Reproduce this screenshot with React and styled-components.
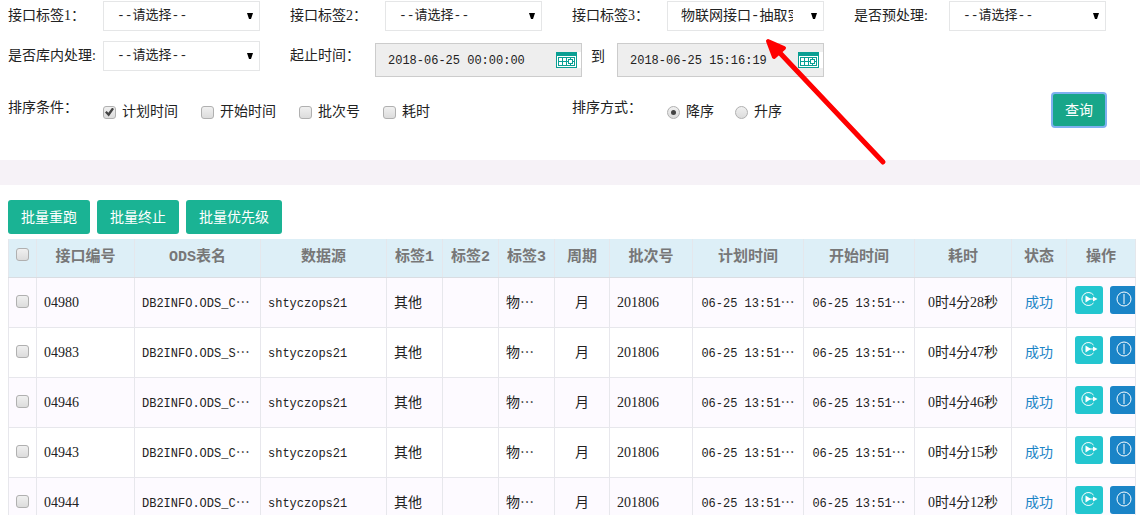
import React, { useState } from 'react';
import { styled, createGlobalStyle } from 'styled-components';

const HOLDER = '--请选择--';

const rows = [
  { id: '04980', table: 'DB2INFO.ODS_C', cost: '0时4分28秒' },
  { id: '04983', table: 'DB2INFO.ODS_S', cost: '0时4分47秒' },
  { id: '04946', table: 'DB2INFO.ODS_C', cost: '0时4分46秒' },
  { id: '04943', table: 'DB2INFO.ODS_C', cost: '0时4分15秒' },
  { id: '04944', table: 'DB2INFO.ODS_C', cost: '0时4分12秒' },
];

const columns = [
  ['接口编号', 98],
  ['ODS表名', 126],
  ['数据源', 126],
  ['标签1', 56],
  ['标签2', 56],
  ['标签3', 56],
  ['周期', 55],
  ['批次号', 83],
  ['计划时间', 111],
  ['开始时间', 111],
  ['耗时', 97],
  ['状态', 55],
  ['操作', 69],
];

function SelectField({ id, label, options = [HOLDER] }) {
  return (
    <Field>
      <Label htmlFor={id}>{label}</Label>
      <SelectWrap>
        <Select id={id} $filled={options[0] !== HOLDER}>
          {options.map((o) => (
            <option key={o}>{o}</option>
          ))}
        </Select>
        <Caret viewBox="0 0 6 7">
          <path d="M0 0h6L4 6H2z" fill="#000" />
        </Caret>
      </SelectWrap>
    </Field>
  );
}

function DateInput({ id, label, value }) {
  return (
    <DateBox>
      <DateText id={id} aria-label={label} defaultValue={value} readOnly />
      <CalendarIcon />
    </DateBox>
  );
}

function CalendarIcon() {
  return (
    <Calendar viewBox="0 0 25 16" shapeRendering="crispEdges">
      <path d="M0 0h25v16H0z" fill="#fff" />
      <path d="M0 0h21v16H0z" fill="#0a9f93" />
      <path d="M1 4h19v11H1z" fill="#fff" />
      <path
        d="M2.5 5.5h16v8h-16zM2.5 9.5h9M6.5 5.5v8M10.5 5.5v8M12.5 7.5h4v4h-4zM14.5 5.5v2M14.5 11.5v2M16.5 9.5h2"
        fill="none"
        stroke="#0a9f93"
      />
    </Calendar>
  );
}

function RerunIcon() {
  return (
    <Glyph viewBox="0 0 18 16">
      <path d="M13.500 4A6.500 6.500 0 1 0 13.500 12" />
      <path d="M6 8h8" />
      <path d="M5.500 4.500L11 8l-5.500 3.500zM13 5.500L17.500 8L13 10.500z" fill="#fff" stroke="none" />
    </Glyph>
  );
}

function StopIcon() {
  return (
    <Glyph viewBox="0 0 18 16">
      <circle cx="9" cy="8" r="7" />
      <path d="M9 3v10" />
    </Glyph>
  );
}

function App() {
  const [checked, setChecked] = useState([]);

  const toggle = (id) =>
    setChecked((prev) =>
      prev.includes(id) ? prev.filter((v) => v !== id) : [...prev, id]
    );
  const toggleAll = () =>
    setChecked(checked.length === rows.length ? [] : rows.map((r) => r.id));

  return (
    <>
      <GlobalStyle />
      <Filters>
        <SelectField id="tag1" label="接口标签1：" />
        <SelectField id="tag2" label="接口标签2：" />
        <Marked>
          <SelectField
            id="tag3"
            label="接口标签3："
            options={['物联网接口-抽取实时']}
          />
          <Arrow viewBox="0 0 130 135">
            <path d="M18 17L121 126" stroke="#f00" strokeWidth="5" strokeLinecap="round" />
            <path d="M6 5l16 7-10 9z" fill="#f00" stroke="#f00" strokeWidth="4" strokeLinejoin="round" />
          </Arrow>
        </Marked>
        <SelectField id="pre" label="是否预处理:" />

        <SelectField id="inner" label="是否库内处理:" />
        <DateRange>
          <DateLabel htmlFor="from">起止时间：</DateLabel>
          <DateInput id="from" label="开始" value="2018-06-25 00:00:00" />
          <To>到</To>
          <DateInput id="to" label="结束" value="2018-06-25 15:16:19" />
        </DateRange>
      </Filters>

      <SortRow>
        <Choices $span={2}>
          <Legend>排序条件：</Legend>
          <Options $gap={23}>
            <Choice>
              <Check type="checkbox" defaultChecked />
              计划时间
            </Choice>
            <Choice>
              <Check type="checkbox" />
              开始时间
            </Choice>
            <Choice>
              <Check type="checkbox" />
              批次号
            </Choice>
            <Choice>
              <Check type="checkbox" />
              耗时
            </Choice>
          </Options>
        </Choices>
        <Choices>
          <Legend>排序方式：</Legend>
          <Options $gap={21}>
            <Choice>
              <Radio type="radio" name="order" defaultChecked />
              降序
            </Choice>
            <Choice>
              <Radio type="radio" name="order" />
              升序
            </Choice>
          </Options>
        </Choices>
        <SearchCell>
          <SearchButton type="button">查询</SearchButton>
        </SearchCell>
      </SortRow>

      <Divider />

      <Toolbar>
        <Button type="button">批量重跑</Button>
        <Button type="button">批量终止</Button>
        <Button type="button">批量优先级</Button>
      </Toolbar>

      <TableWrap>
        <Table>
          <colgroup>
            <Col $w={28} />
            {columns.map(([name, w]) => (
              <Col key={name} $w={w} />
            ))}
          </colgroup>
          <thead>
            <tr>
              <Th>
                <TableCheck
                  type="checkbox"
                  aria-label="全选"
                  checked={checked.length === rows.length}
                  onChange={toggleAll}
                />
              </Th>
              {columns.map(([name]) => (
                <Th key={name}>{name}</Th>
              ))}
            </tr>
          </thead>
          <tbody>
            {rows.map((row) => (
              <Row key={row.id}>
                <Td $center>
                  <TableCheck
                    type="checkbox"
                    aria-label={row.id}
                    checked={checked.includes(row.id)}
                    onChange={() => toggle(row.id)}
                  />
                </Td>
                <Td>{row.id}</Td>
                <Td>
                  <Mono>{row.table}</Mono>
                  <Dots>…</Dots>
                </Td>
                <Td>
                  <Mono>shtyczops21</Mono>
                </Td>
                <Td>其他</Td>
                <Td />
                <Td>
                  物<Dots>…</Dots>
                </Td>
                <Td $center>月</Td>
                <Td>201806</Td>
                <Td $center>
                  <Mono>06-25 13:51</Mono>
                  <Dots>…</Dots>
                </Td>
                <Td $center>
                  <Mono>06-25 13:51</Mono>
                  <Dots>…</Dots>
                </Td>
                <Td $center>{row.cost}</Td>
                <Td $center>
                  <Status>成功</Status>
                </Td>
                <Td>
                  <Actions>
                    <IconButton type="button" aria-label="重跑" $color="#23c6cf">
                      <RerunIcon />
                    </IconButton>
                    <IconButton type="button" aria-label="终止" $color="#1a84c7">
                      <StopIcon />
                    </IconButton>
                  </Actions>
                </Td>
              </Row>
            ))}
          </tbody>
        </Table>
      </TableWrap>
    </>
  );
}

export default App;

const GlobalStyle = createGlobalStyle`
  * {
    box-sizing: border-box;
  }
  body {
    margin: 0;
    background: #fff;
    color: #222;
    font-family: 'Liberation Serif', 'Noto Sans CJK SC', serif;
    font-size: 14px;
    line-height: 20px;
  }
  input, select, button {
    font-family: inherit;
    font-size: inherit;
    line-height: inherit;
    color: inherit;
    margin: 0;
  }
`;

const Filters = styled.div`
  display: grid;
  grid-template-columns: repeat(4, 1fr);
  row-gap: 10px;
  padding: 1px 4px 0 8px;
`;

const Field = styled.div`
  display: flex;
  align-items: flex-start;
`;

const Label = styled.label`
  width: 95px;
  flex: none;
  padding-top: 5px;
  white-space: nowrap;
`;

const SelectWrap = styled.div`
  position: relative;
  width: 157px;
`;

const Select = styled.select`
  appearance: none;
  width: 100%;
  height: 30px;
  padding: 0 30px 0 13px;
  border: 1px solid #e5e6e7;
  border-radius: 0;
  background: #fff;
  font-family: 'Liberation Mono', 'Noto Sans CJK SC', monospace;
  font-size: ${({ $filled }) => ($filled ? '14px' : '13px')};
`;

const Caret = styled.svg`
  position: absolute;
  top: 12px;
  right: 7px;
  width: 6px;
  height: 7px;
  pointer-events: none;
`;

const Marked = styled.div`
  position: relative;
`;

const Arrow = styled.svg`
  position: absolute;
  z-index: 1;
  top: 35px;
  left: 190px;
  width: 130px;
  height: 135px;
  pointer-events: none;
`;

const DateRange = styled.div`
  grid-column: span 3;
  display: flex;
  align-items: flex-start;
`;

const DateLabel = styled(Label)`
  width: 85px;
`;

const DateBox = styled.div`
  display: flex;
  align-items: center;
  width: 207px;
  height: 34px;
  margin-top: 2px;
  border: 1px solid #ccc;
  background: #eee;
`;

const DateText = styled.input`
  flex: 1;
  min-width: 0;
  padding: 2px 0 0 12px;
  border: 0;
  outline: 0;
  background: none;
  font-family: 'Liberation Mono', monospace;
  font-size: 12px;
`;

const Calendar = styled.svg`
  width: 25px;
  height: 16px;
`;

const To = styled.span`
  width: 35px;
  padding: 6px 0 0 9px;
`;

const SortRow = styled.div`
  display: grid;
  grid-template-columns: repeat(4, 1fr);
  padding: 16px 4px 33px 8px;
`;

const Choices = styled.div`
  grid-column: span ${({ $span = 1 }) => $span};
  display: flex;
  align-items: flex-start;
`;

const Legend = styled.span`
  width: 95px;
  padding-top: 5px;
  white-space: nowrap;
`;

const Options = styled.div`
  display: flex;
  gap: ${({ $gap }) => $gap}px;
`;

const Choice = styled.label`
  display: flex;
  align-items: center;
  gap: 6px;
  padding-top: 9px;
  white-space: nowrap;
`;

const Check = styled.input`
  appearance: none;
  display: inline-block;
  position: relative;
  flex: none;
  width: 13px;
  height: 13px;
  border: 1px solid #b0b0b0;
  border-radius: 3px;
  background: linear-gradient(#f0f0f0, #dcdcdc);
  vertical-align: middle;

  &:checked::after {
    content: '';
    position: absolute;
    inset: 1px;
    background: #444;
    clip-path: polygon(0 55%, 18% 38%, 38% 58%, 80% 0, 100% 16%, 42% 100%);
  }
`;

const Radio = styled(Check)`
  border-radius: 50%;

  &:checked::after {
    inset: 3px;
    border-radius: 50%;
    clip-path: none;
  }
`;

const TableCheck = styled(Check)`
  margin-bottom: 4px;
`;

const SearchCell = styled.div`
  display: flex;
  justify-content: flex-end;
  align-items: flex-start;
  padding-right: 30px;
`;

const Button = styled.button`
  height: 34px;
  padding: 2px 13px 0;
  border: 0;
  border-radius: 3px;
  background: #1ab394;
  color: #fff;
  cursor: pointer;
`;

const SearchButton = styled(Button)`
  background: #18a689;
  outline: 2px solid #7fb0f0;
  outline-offset: -1px;
`;

const Divider = styled.div`
  height: 25px;
  background: #f6f2f7;
`;

const Toolbar = styled.div`
  display: flex;
  gap: 7px;
  padding: 15px 8px 5px;
`;

const TableWrap = styled.div`
  padding: 0 4px 0 8px;
`;

const Table = styled.table`
  width: 100%;
  table-layout: fixed;
  border-collapse: collapse;
`;

const Col = styled.col`
  width: ${({ $w }) => $w}px;
`;

const Th = styled.th`
  height: 38px;
  padding: 0;
  border: 1px solid #e4e7ec;
  border-top: 0;
  border-bottom-color: #d9dde2;
  background: #ddeff7;
  color: #777;
  font-family: 'Liberation Mono', 'Noto Sans CJK SC', monospace;
  font-size: 15px;
  white-space: nowrap;
`;

const Row = styled.tr`
  &:nth-child(odd) {
    background: #fdfaff;
  }
`;

const Td = styled.td`
  height: 50px;
  padding: ${({ $center }) => ($center ? '2px 0 0' : '2px 0 0 7px')};
  border: 1px solid #e7e7ec;
  overflow: hidden;
  white-space: nowrap;
  text-align: ${({ $center }) => ($center ? 'center' : 'left')};
`;

const Mono = styled.span`
  font-family: 'Liberation Mono', monospace;
  font-size: 12px;
`;

const Dots = styled.span.attrs({ lang: 'zh-CN' })`
  font-family: 'Noto Sans CJK SC', sans-serif;
  line-height: 1;
`;

const Status = styled.span`
  color: #1c84c6;
`;

const Actions = styled.div`
  display: flex;
  gap: 7px;
  padding: 0 0 6px 1px;
`;

const IconButton = styled.button`
  display: flex;
  flex: none;
  align-items: center;
  justify-content: center;
  width: 28px;
  height: 28px;
  padding: 0 0 3px;
  border: 0;
  border-radius: 3px;
  background: ${({ $color }) => $color};
  cursor: pointer;
`;

const Glyph = styled.svg`
  flex: none;
  width: 18px;
  height: 16px;
  fill: none;
  stroke: #fff;
`;
